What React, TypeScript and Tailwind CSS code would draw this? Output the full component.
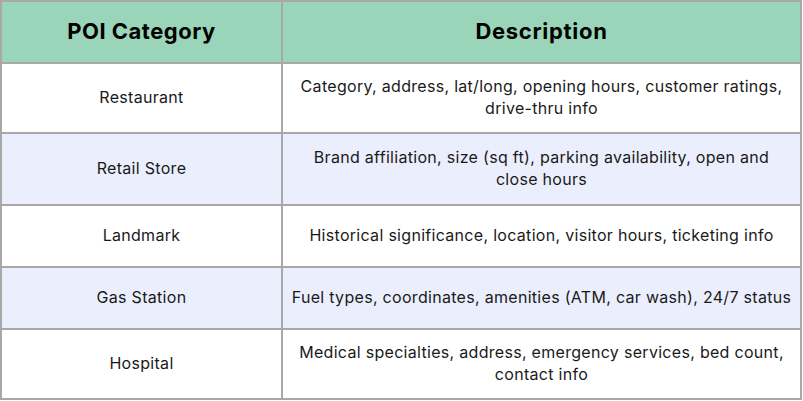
import React from "react";

const rows: [string, React.ReactNode, boolean][] = [
  ["Restaurant", <>Category, address, lat/long, opening hours, customer ratings,<br />drive-thru info</>, false],
  ["Retail Store", <>Brand affiliation, size (sq ft), parking availability, open and<br />close hours</>, true],
  ["Landmark", <>Historical significance, location, visitor hours, ticketing info</>, false],
  ["Gas Station", <>Fuel types, coordinates, amenities (ATM, car wash), 24/7 status</>, true],
  ["Hospital", <>Medical specialties, address, emergency services, bed count,<br />contact info</>, false],
];

const heights = ["h-[70px]", "h-[72px]", "h-[62px]", "h-[62px]", "h-[70px]"];

export default function App() {
  return (
    <div className="w-[803px] h-[401px] bg-white" style={{ fontFamily: "Inter, 'Noto Sans', sans-serif" }}>
      <table className="w-[802px] border-collapse border-2 border-[#a8a8a8] text-[#1a1a1a]">
        <thead>
          <tr className="h-[62px] bg-[#9ad5b9]">
            <th className="w-[281px] border-2 border-[#a8a8a8] text-[22px] tracking-[0.5px] font-bold text-black pb-[2px]">POI Category</th>
            <th className="border-2 border-[#a8a8a8] text-[22px] tracking-[0.7px] font-bold text-black pb-[2px]">Description</th>
          </tr>
        </thead>
        <tbody>
          {rows.map(([a, b, alt], i) => (
            <tr key={a} className={`${heights[i]} ${alt ? "bg-[#ebeffd]" : "bg-white"}`}>
              <td className="border-2 border-[#a8a8a8] text-center text-[16px] tracking-[0.3px] leading-[22px] pb-[3px]">{a}</td>
              <td className="border-2 border-[#a8a8a8] text-center text-[16px] tracking-[0.3px] leading-[22px] px-[4px] pb-[3px] whitespace-nowrap">{b}</td>
            </tr>
          ))}
        </tbody>
      </table>
    </div>
  );
}
